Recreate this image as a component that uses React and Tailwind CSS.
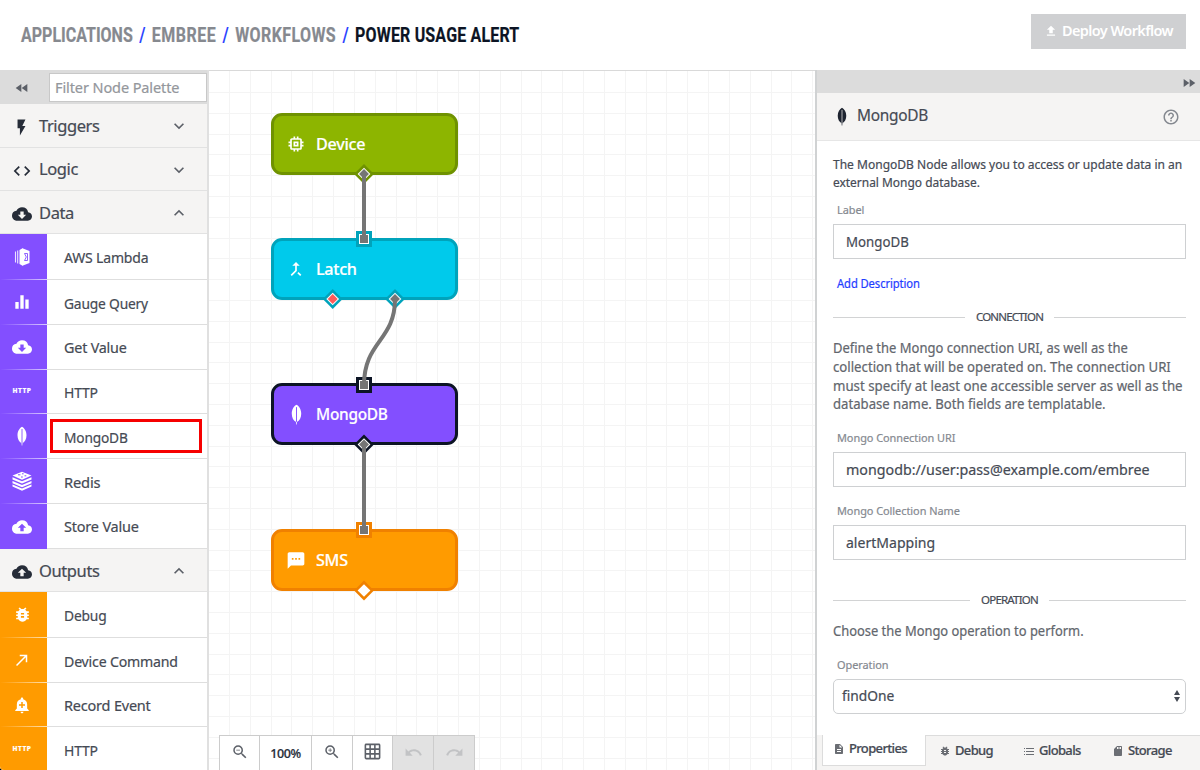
import React from "react";
import {
  MdFlashOn, MdCode, MdCloudDownload, MdCloudUpload, MdExpandMore, MdExpandLess,
  MdFastRewind, MdFastForward, MdEqualizer, MdBugReport, MdCallMade, MdAddAlert,
  MdCallMerge, MdTextsms, MdMemory, MdZoomOut, MdZoomIn, MdGridOn, MdUndo, MdRedo,
  MdHelpOutline, MdDescription, MdSdCard,
} from "react-icons/md";

function Leaf({ className, slit }) {
  return (
    <svg viewBox="0 0 12 20" className={className}>
      <path d="M6 .8C3.600 2 1.500 5.200 1.500 9.300c0 3.800 1.700 6.700 4.100 7.900l.1 2.300h.6l.1-2.300c2.400-1.200 4.100-4.100 4.100-7.900C10.500 5.200 8.400 2 6 .8z" fill="currentColor" />
      <path d="M6 3v14" stroke={slit} strokeWidth="0.9" />
    </svg>
  );
}

function Lambda() {
  return (
    <svg viewBox="0 0 18 20" className="h-5 w-[18px]">
      <path d="M2.500 4.500v11M4.700 3.500v13" stroke="#fff" strokeWidth="1.100" opacity=".85" />
      <path d="M6.500 3 10 1v18l-3.500-2z" fill="#fff" />
      <path d="M10 1.500l6.500 2.500v12L10 18.500z" fill="#fff" />
      <path d="M11.500 6.500h3v7h-3l1.800-3.500z" stroke="#834fff" strokeWidth=".9" fill="none" />
    </svg>
  );
}

function Redis() {
  return (
    <svg viewBox="0 0 20 20" className="h-5 w-5">
      <path d="M10 .8 19.500 4.600 10 8.800.5 4.600z" fill="#fff" />
      <path d="M.5 6.200 10 10.200l9.500-4v2.300L10 12.600.5 8.500zM.5 9.900l9.500 4 9.500-4v2.300L10 16.300.5 12.200zM.5 13.600l9.500 4 9.500-4v2L10 19.700.5 15.600z" fill="#fff" />
      <path d="M6 3.800h2.400M10 2.800h1.600M12.500 4.800h1.800M9 6h1.800" stroke="#834fff" strokeWidth="1" />
    </svg>
  );
}

function Upload() {
  return (
    <svg viewBox="0 0 24 24" className="h-[14px] w-[14px]" fill="currentColor">
      <path d="M9 16h6v-6h4l-7-7-7 7h4zm-4 2h14v2.200H5z" />
    </svg>
  );
}

function Lines() {
  return (
    <svg viewBox="0 0 12 12" className="h-3 w-3" stroke="#6b6e74">
      <path d="M1 3.500h1M3 3.500h8M1 6.500h1M3 6.500h8M1 9.500h1M3 9.500h8" />
    </svg>
  );
}

const Http = () => <span className="text-[6.500px] font-extrabold leading-none tracking-[0.5px]">HTTP</span>;

const Text = ({ fit, children }) => <span className={`inline-block origin-left whitespace-nowrap ${fit}`}>{children}</span>;

function Section({ icon, title, open, height }) {
  const Chevron = open ? MdExpandLess : MdExpandMore;
  return (
    <div className={`flex shrink-0 items-center border-b border-[#e2e2e2] bg-[#f5f4f3] pl-3 pr-[18px] ${open ? "pt-[2px]" : "pt-px"} ${height}`}>
      <span className="flex w-[27px] items-center pt-[2px] text-[#262c38]">{icon}</span>
      <span className="flex-1 text-[16.500px] tracking-[-0.4px]">{title}</span>
      <Chevron className="h-5 w-5 text-[#5c6068]" />
    </div>
  );
}

function Item({ icon, label, color, height, fit, boxed, last }) {
  return (
    <div className={`flex shrink-0 ${height}`}>
      <div className={`flex w-[47px] shrink-0 flex-col ${color}`}>
        <div className="flex flex-1 items-center justify-center pr-[3px] text-white">{icon}</div>
        {!last && <div className="h-px bg-linear-to-r from-transparent to-white/70" />}
      </div>
      <div className="flex flex-1 items-center border-b border-[#dedede] pl-[3px] pr-[5px]">
        <div className={`flex h-[34px] flex-1 items-center border-[3px] pl-[11px] pt-px text-[15px] tracking-[-0.2px] ${boxed ? "border-[#f60000]" : "border-transparent"}`}>
          <Text fit={fit}>{label}</Text>
        </div>
      </div>
    </div>
  );
}

function Node({ place, icon, label, fit }) {
  return (
    <div className={`absolute left-[62px] flex h-[62px] w-[187px] items-center rounded-[11px] border-[3px] pl-3 text-[16.500px] font-medium tracking-[-0.3px] text-white ${place}`}>
      <span className="mr-[10px] flex w-[20px] justify-center">{icon}</span>
      <Text fit={fit}>{label}</Text>
    </div>
  );
}

function Square({ y, stroke }) {
  return (
    <g>
      <rect x="356" y={y - 8} width="16" height="16" fill={stroke} />
      <rect x="359" y={y - 5} width="10" height="10" fill="#fff" />
      <rect x="360" y={y - 4} width="8" height="8" fill="#757575" />
    </g>
  );
}

function Diamond({ x, y, stroke, fill }) {
  return (
    <g transform={`translate(${x} ${y}) rotate(45)`}>
      <rect x="-7" y="-7" width="14" height="14" fill={stroke} />
      <rect x="-4.500" y="-4.500" width="9" height="9" fill="#fff" />
      <rect x="-3.500" y="-3.500" width="7" height="7" fill={fill} />
    </g>
  );
}

const columns = Array.from({ length: 29 }, (_, i) => Math.round(229 + i * 20.83));
const rows = Array.from({ length: 33 }, (_, i) => Math.round(92 + i * 20.8));

function Canvas() {
  return (
    <main className="relative w-[606px] shrink-0 overflow-hidden border-t border-[#d9d9d9] bg-white">
      <svg viewBox="209 71 606 699" className="absolute left-0 top-0 h-[699px] w-[606px]">
        {columns.map((x) => <rect key={x} x={x} y="71" width="1" height="699" fill="#f4f4f4" />)}
        {rows.map((y) => <rect key={y} x="209" y={y} width="606" height="1" fill="#f4f4f4" />)}
      </svg>
      <Node place="top-[42px] border-[#6f9200] bg-[#8db500]" icon={<MdMemory className="h-5 w-5" />} label="Device" fit="scale-x-[0.98]" />
      <Node place="top-[167px] border-[#00a3bb] bg-[#00caeb]" icon={<MdCallMerge className="h-5 w-5" />} label="Latch" fit="scale-x-[0.98]" />
      <Node place="top-[312px] border-[#0c1424] bg-[#834fff]" icon={<Leaf className="h-[21px] w-[13px]" slit="#834fff" />} label="MongoDB" fit="scale-x-[0.935]" />
      <Node place="top-[458px] border-[#f08100] bg-[#ff9b00]" icon={<MdTextsms className="h-[21px] w-[21px]" />} label="SMS" fit="scale-x-[0.98]" />
      <svg viewBox="209 71 606 699" className="absolute left-0 top-0 h-[699px] w-[606px]">
        <Diamond x={364} y={174} stroke="#6f9200" fill="#757575" />
        <Square y={239} stroke="#00a3bb" />
        <Diamond x={332.700} y={299} stroke="#00a3bb" fill="#ff5a5a" />
        <Diamond x={395} y={299} stroke="#00a3bb" fill="#757575" />
        <Square y={385} stroke="#0c1424" />
        <Diamond x={364} y={444.500} stroke="#0c1424" fill="#757575" />
        <Square y={530} stroke="#f08100" />
        <Diamond x={364} y={590.500} stroke="#f08100" fill="#fff" />
        <path d="M364 174V239M395 299C395 341 364 341 364 385M364 444V530" fill="none" stroke="#757575" strokeWidth="4" />
      </svg>
      <div className="absolute bottom-0 left-[10px] flex h-[35px] divide-x divide-[#ccc] border-x border-t border-[#ccc] bg-white text-[#5c6068]">
        <div className="flex w-[40px] justify-center pt-[7px]"><MdZoomOut className="h-[18px] w-[18px]" /></div>
        <div className="w-[52px] pt-[8px] text-center text-[12.500px] font-medium leading-5 tracking-[-0.4px] text-[#262c38]">100%</div>
        <div className="flex w-[41px] justify-center pt-[7px]"><MdZoomIn className="h-[18px] w-[18px]" /></div>
        <div className="flex w-[40px] justify-center pt-[6px]"><MdGridOn className="h-[19px] w-[19px]" /></div>
        <div className="flex w-[41px] justify-center bg-[#e2e2e2] pt-[7px] text-[#c2c3c5]"><MdUndo className="h-[19px] w-[19px]" /></div>
        <div className="flex w-[40px] justify-center bg-[#e2e2e2] pt-[7px] text-[#c2c3c5]"><MdRedo className="h-[19px] w-[19px]" /></div>
      </div>
    </main>
  );
}

function Divider({ children }) {
  return (
    <div className="flex h-4 items-center gap-[11px] text-[11.500px] tracking-[-0.8px]">
      <span className="mt-px h-px flex-1 bg-[#d2d3d4]" />
      <span>{children}</span>
      <span className="mt-px h-px flex-1 bg-[#d2d3d4]" />
    </div>
  );
}

const FieldLabel = ({ children }) => (
  <div className="h-4 pl-1 text-[11.500px] leading-4 tracking-[-0.05px] text-[#858990]"><Text fit="scale-x-[0.95]">{children}</Text></div>
);

const Field = ({ fit, children }) => (
  <div className="mt-[6px] flex h-[35px] items-center border border-[#ced0d2] pl-3 text-[14.500px]"><Text fit={fit}>{children}</Text></div>
);

function Tab({ icon, width, children }) {
  return (
    <div className={`flex shrink-0 items-center gap-[4px] text-[13px] font-medium tracking-[-0.65px] ${width}`}>
      {icon}
      {children}
    </div>
  );
}

function Panel() {
  return (
    <aside className="flex w-[385px] shrink-0 flex-col border-l-2 border-[#d0d2d3] bg-white">
      <div className="flex h-[23px] shrink-0 items-center justify-end bg-[#dcdcdc] pr-[3px] pt-[2px] text-[#5c6068]">
        <MdFastForward className="h-4 w-4" />
      </div>
      <div className="flex h-12 shrink-0 items-center border-b border-[#e6e6e6] bg-[#f5f4f3] pl-[19px] pr-5">
        <Leaf className="h-[19px] w-3 text-[#1e2430]" slit="#d0d0d0" />
        <span className="ml-[9px] flex-1 pb-[3px] text-[16.500px] tracking-[-0.3px]"><Text fit="scale-x-[0.935]">MongoDB</Text></span>
        <MdHelpOutline className="h-[18px] w-[18px] text-[#858990]" />
      </div>
      <div className="flex flex-1 flex-col whitespace-nowrap pl-4 pr-[14px] pt-[15px]">
        <p className="flex flex-col text-[12.500px] leading-[18px]">
          <Text fit="scale-x-[0.962]">The MongoDB Node allows you to access or update data in an</Text>
          <Text fit="scale-x-[0.955]">external Mongo database.</Text>
        </p>
        <div className="mt-[10px]"><FieldLabel>Label</FieldLabel></div>
        <Field fit="scale-x-[0.915]">MongoDB</Field>
        <a className="mt-[17px] pl-1 text-[12px] leading-4 tracking-[-0.1px] text-[#1f3dff]"><Text fit="scale-x-[0.935]">Add Description</Text></a>
        <div className="mt-[17px]"><Divider>CONNECTION</Divider></div>
        <p className="mt-[14px] flex flex-col text-[13.500px] leading-[18.750px] text-[#62666d]">
          <Text fit="scale-x-[0.962]">Define the Mongo connection URI, as well as the</Text>
          <Text fit="scale-x-[0.977]">collection that will be operated on. The connection URI</Text>
          <Text fit="scale-x-[0.983]">must specify at least one accessible server as well as the</Text>
          <Text fit="scale-x-[0.973]">database name. Both fields are templatable.</Text>
        </p>
        <div className="mt-4"><FieldLabel>Mongo Connection URI</FieldLabel></div>
        <Field fit="scale-x-[0.983]">mongodb://user:pass@example.com/embree</Field>
        <div className="mt-4"><FieldLabel>Mongo Collection Name</FieldLabel></div>
        <Field fit="scale-x-[0.968]">alertMapping</Field>
        <div className="mt-8"><Divider>OPERATION</Divider></div>
        <p className="mt-[14px] flex flex-col text-[13.500px] leading-[18.750px] text-[#62666d]">
          <Text fit="scale-x-[0.957]">Choose the Mongo operation to perform.</Text>
        </p>
        <div className="mt-4"><FieldLabel>Operation</FieldLabel></div>
        <div className="mt-[6px] flex h-[35px] items-center justify-between rounded-[5px] border border-[#ced0d2] pl-2 pr-1 text-[14.500px]">
          <Text fit="scale-x-[0.95]">findOne</Text>
          <svg viewBox="0 0 8 14" className="h-[14px] w-2" fill="#454a54">
            <path d="M4 1 7 6H1zM4 13 1 8h6z" />
          </svg>
        </div>
      </div>
      <div className="flex h-[35px] shrink-0 bg-[#f5f4f3] pl-[5px]">
        <div className="-mr-px flex h-[31px] w-[104px] shrink-0 border-x border-b border-[#dcdcdc] bg-white pb-[3px] pl-[10px]">
          <Tab icon={<MdDescription className="h-3 w-3 text-[#6b6e74]" />}>Properties</Tab>
        </div>
        <div className="flex h-full flex-1 items-center border-t border-[#dcdcdc] pb-[5px] pl-[14px]">
          <Tab width="w-[84px]" icon={<MdBugReport className="h-3 w-3 text-[#6b6e74]" />}>Debug</Tab>
          <Tab width="w-[89px]" icon={<Lines />}>Globals</Tab>
          <Tab icon={<MdSdCard className="h-3 w-3 text-[#6b6e74]" />}>Storage</Tab>
        </div>
      </div>
    </aside>
  );
}

const purple = "bg-[#834fff]";
const orange = "bg-[#ff9b00]";

function Sidebar() {
  return (
    <aside className="flex w-[209px] shrink-0 flex-col overflow-hidden border-r-2 border-[#e0e0e0] bg-white">
      <div className="flex h-[34px] shrink-0 items-center bg-[#dcdcdc] text-[#5c6068]">
        <div className="flex w-[49px] justify-center pr-[5px] pt-[2px]"><MdFastRewind className="h-4 w-4" /></div>
        <div className="mt-px flex h-[29px] flex-1 items-center border border-[#c8c8c8] bg-white pl-[5px] text-[14.500px] tracking-[-0.1px] text-[#94979c]">Filter Node Palette</div>
      </div>
      <Section icon={<MdFlashOn className="h-[19px] w-[19px]" />} title="Triggers" height="h-[44px]" />
      <Section icon={<MdCode className="h-5 w-5" />} title="Logic" height="h-[43px]" />
      <Section icon={<MdCloudDownload className="h-5 w-5" />} title="Data" open height="h-[43px]" />
      <Item icon={<Lambda />} label="AWS Lambda" color={purple} height="h-[46px]" fit="scale-x-[0.935]" />
      <Item icon={<MdEqualizer className="h-5 w-5" />} label="Gauge Query" color={purple} height="h-[45px]" fit="pt-px scale-x-[0.92]" />
      <Item icon={<MdCloudDownload className="h-5 w-5" />} label="Get Value" color={purple} height="h-[45px]" fit="scale-x-[0.955]" />
      <Item icon={<Http />} label="HTTP" color={purple} height="h-11" fit="scale-x-[0.93]" />
      <Item icon={<Leaf className="h-5 w-3" slit="#834fff" />} label="MongoDB" color={purple} height="h-[45px]" fit="pt-[2px] scale-x-[0.915]" boxed />
      <Item icon={<Redis />} label="Redis" color={purple} height="h-[45px]" fit="pt-px scale-x-[0.98]" />
      <Item icon={<MdCloudUpload className="h-5 w-5" />} label="Store Value" color={purple} height="h-[45px]" fit="scale-x-[0.965]" last />
      <Section icon={<MdCloudUpload className="h-5 w-5" />} title="Outputs" open height="h-[43px]" />
      <Item icon={<MdBugReport className="h-[19px] w-[19px]" />} label="Debug" color={orange} height="h-[46px]" fit="scale-x-[0.92]" />
      <Item icon={<MdCallMade className="h-[18px] w-[18px]" />} label="Device Command" color={orange} height="h-[45px]" fit="pt-px scale-x-[0.942]" />
      <Item icon={<MdAddAlert className="h-[18px] w-[18px]" />} label="Record Event" color={orange} height="h-11" fit="pt-px scale-x-[0.965]" />
      <Item icon={<Http />} label="HTTP" color={orange} height="h-[45px]" fit="pt-[2px] scale-x-[0.93]" last />
    </aside>
  );
}

const Slash = () => <span className="font-medium text-[#1f3dff]">/</span>;

export default function App() {
  return (
    <div className="bg-black">
      <div className="flex h-[770px] w-[1200px] flex-col overflow-hidden rounded-bl-[4px] bg-white font-['Noto_Sans',sans-serif] text-[#454a54] [-webkit-text-stroke:0.2px]">
        <header className="flex h-[70px] shrink-0 items-start justify-between pl-[21px] pr-[14px]">
          <div className="flex origin-left scale-x-[0.8] gap-2 whitespace-nowrap pt-[21px] font-['Roboto',sans-serif] text-[20px] font-bold leading-7 text-[#86898f]">
            <span>APPLICATIONS</span><Slash /><span className="tracking-[0.6px]">EMBREE</span><Slash /><span className="tracking-[0.5px]">WORKFLOWS</span><Slash />
            <span className="tracking-[0.2px] text-[#0c1424]">POWER USAGE ALERT</span>
          </div>
          <div className="mt-[14px] flex h-[35px] w-[155px] items-center justify-center gap-1 bg-[#cfd0d2] pb-[2px] text-[14.500px] font-semibold tracking-[-0.6px] text-white [-webkit-text-stroke:0px]">
            <Upload />Deploy Workflow
          </div>
        </header>
        <div className="flex h-[700px]">
          <Sidebar />
          <Canvas />
          <Panel />
        </div>
      </div>
    </div>
  );
}
